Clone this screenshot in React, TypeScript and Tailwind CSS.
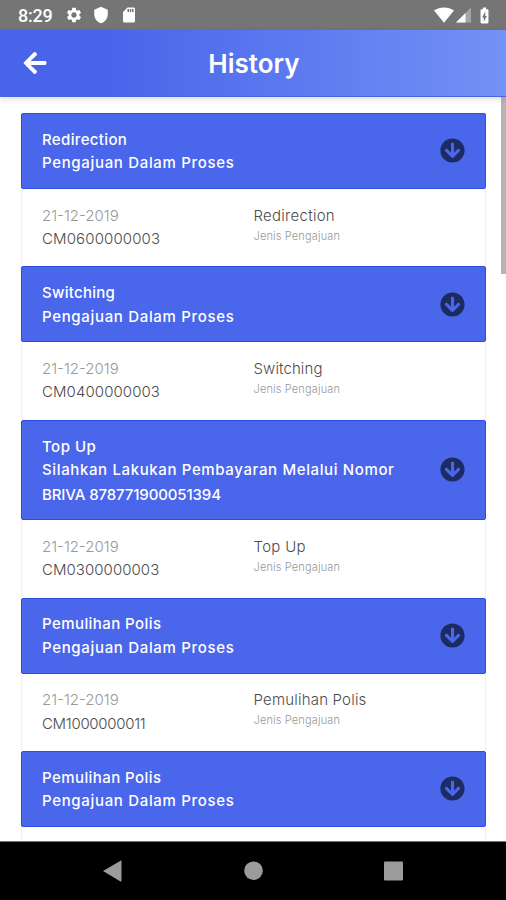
import React from "react";
import { FaArrowCircleDown, FaArrowLeft } from "react-icons/fa";
import { MdSettings, MdShield, MdSdCard, MdBatteryChargingFull } from "react-icons/md";

type Line = { text: string; track: string };
type Entry = { title: Line; status: Line[]; code?: Line; kind?: Line };

const inProcess: Line[] = [{ text: "Pengajuan Dalam Proses", track: "tracking-[0.67px]" }];

const entries: Entry[] = [
  {
    title: { text: "Redirection", track: "tracking-[0.35px]" },
    status: inProcess,
    code: { text: "CM0600000003", track: "tracking-[0.13px]" },
    kind: { text: "Redirection", track: "tracking-[0.27px]" },
  },
  {
    title: { text: "Switching", track: "tracking-[0.28px]" },
    status: inProcess,
    code: { text: "CM0400000003", track: "tracking-[0.08px]" },
    kind: { text: "Switching", track: "tracking-[0.1px]" },
  },
  {
    title: { text: "Top Up", track: "tracking-[0.5px]" },
    status: [
      { text: "Silahkan Lakukan Pembayaran Melalui Nomor", track: "tracking-[0.63px]" },
      { text: "BRIVA 878771900051394", track: "tracking-[-0.12px]" },
    ],
    code: { text: "CM0300000003", track: "tracking-[0.05px]" },
    kind: { text: "Top Up", track: "tracking-[0.3px]" },
  },
  {
    title: { text: "Pemulihan Polis", track: "tracking-[0.43px]" },
    status: inProcess,
    code: { text: "CM1000000011", track: "tracking-[-0.3px]" },
    kind: { text: "Pemulihan Polis", track: "tracking-[0.2px]" },
  },
  {
    title: { text: "Pemulihan Polis", track: "tracking-[0.43px]" },
    status: inProcess,
  },
];

function StatusBar() {
  return (
    <div className="flex h-[30px] shrink-0 items-center bg-[#757575] pr-[12px] pl-[18px] text-white">
      <span className="w-[47px] pt-[2px] font-[Roboto,sans-serif] text-[18px] leading-[30px] font-medium tracking-[-0.2px]">8:29</span>
      <MdSettings size={18} />
      <MdShield size={18} className="ml-[9px]" />
      <MdSdCard size={18} className="ml-[10px]" />
      <div className="ml-auto flex items-center">
        <svg width="20" height="16" viewBox="0 0 20 16" fill="currentColor">
          <path d="M0 3.6C5.6-.7 14.4-.7 20 3.6L10 15.8z" />
        </svg>
        <svg width="15" height="16" viewBox="0 0 15 16" fill="currentColor" className="ml-[2px]">
          <path d="M0 15.5 15 .5v15z" opacity=".35" />
          <path d="M0 15.5 9.5 6v9.5z" />
        </svg>
        <MdBatteryChargingFull size={19} className="ml-[4px]" />
      </div>
    </div>
  );
}

function Card({ entry }: { entry: Entry }) {
  return (
    <section className="shrink-0">
      <div className="flex items-center justify-between rounded-[2px] border border-[#2c4de2] bg-[#4a66ea] pt-[12.75px] pr-5 pb-[13.25px] pl-5 text-[15px] font-medium text-white">
        <div>
          <p className={`h-[23.5px] leading-[25px] ${entry.title.track}`}>{entry.title.text}</p>
          {entry.status.map((s) => (
            <p key={s.text} className={`h-[24.5px] leading-[25px] whitespace-nowrap ${s.track}`}>{s.text}</p>
          ))}
        </div>
        <FaArrowCircleDown size={25} className="text-[#1c2b62]" />
      </div>
      <div className="grid h-[77.4px] grid-cols-2 border-x border-[#eef0f6] pt-[14.5px] pl-5 text-[15px] font-light">
        {entry.code && (
          <div>
            <p className="h-[23.5px] leading-[24px] tracking-[0px] text-[#999]">21-12-2019</p>
            <p className={`leading-[24px] text-[#4c4c4c] ${entry.code.track}`}>{entry.code.text}</p>
          </div>
        )}
        {entry.kind && (
          <div className="-ml-[10px]">
            <p className={`h-[22px] leading-[24px] text-[#4c4c4c] ${entry.kind.track}`}>{entry.kind.text}</p>
            <p className="text-[11px] leading-[20px] tracking-[0.15px] text-[#999]">Jenis Pengajuan</p>
          </div>
        )}
      </div>
    </section>
  );
}

export default function App() {
  return (
    <div className="flex h-[900px] w-[506px] flex-col overflow-hidden bg-white font-[Inter,'Noto_Sans',sans-serif]">
      <StatusBar />
      <header className="z-10 grid h-[67px] shrink-0 grid-cols-[71px_1fr_69px] items-center border-b border-[#4a66e2] bg-linear-to-r from-[#4864ea] from-20% to-[#7491f5] text-white shadow-[0_2px_6px_rgba(0,0,0,0.14)]">
        <FaArrowLeft size={26} className="ml-[22px]" />
        <h1 className="pt-px text-center text-[26px] leading-[36px] font-semibold">History</h1>
      </header>
      <main className="flex min-h-0 flex-1 overflow-hidden">
        <div className="flex flex-1 flex-col pt-4 pr-[15px] pl-[21px]">
          {entries.map((e, i) => (
            <Card key={i} entry={e} />
          ))}
        </div>
        <div className="h-[177px] w-[5px] bg-[#b5b5b5]" />
      </main>
      <nav className="z-10 h-[59px] shrink-0 border-t border-[#777] bg-black">
        <svg width="506" height="58" viewBox="0 0 506 58" fill="#9b9b9b">
          <path d="M103 29 121 18.5Q121.5 18 121.5 19v19.5Q121.5 40 120.5 39.5z" />
          <circle cx="253.5" cy="28.7" r="9.3" />
          <rect x="384" y="19.5" width="19" height="19" rx="1" />
        </svg>
      </nav>
    </div>
  );
}
